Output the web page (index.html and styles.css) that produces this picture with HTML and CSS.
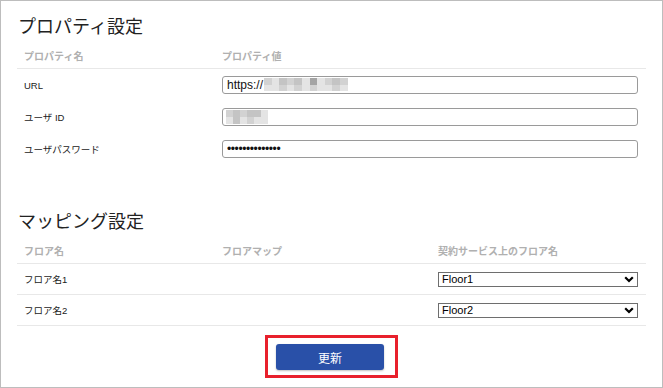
FILE: index.html
```html
<!DOCTYPE html>
<html lang="ja">
<head>
    <meta charset="UTF-8">
    <meta name="viewport" content="width=device-width, initial-scale=1.0">
    <title>設定</title>
    <link rel="stylesheet" href="styles.css">
</head>
<body>
    <div class="page">
        <h2 class="title">プロパティ設定</h2>
        <div class="table props">
            <div class="row head">
                <div class="cell">プロパティ名</div>
                <div class="cell">プロパティ値</div>
            </div>
            <div class="row">
                <div class="cell label">URL</div>
                <div class="cell">
                    <div class="field">
                        <input type="text" value="https://">
                        <span class="mosaic mosaic-url">
                            <i class="m2"></i><i class="m3"></i><i class="m1"></i><i class="m2"></i><i class="m1"></i><i class="m3"></i><i class="m4"></i><i class="m3"></i><i class="m2"></i><i class="m1"></i><i class="m2"></i>
                            <i class="m3"></i><i class="m3"></i><i class="m2"></i><i class="m3"></i><i class="m2"></i><i class="m3"></i><i class="m2"></i><i class="m3"></i><i class="m3"></i><i class="m2"></i><i class="m3"></i>
                        </span>
                    </div>
                </div>
            </div>
            <div class="row">
                <div class="cell label">ユーザ ID</div>
                <div class="cell">
                    <div class="field">
                        <input type="text" value="">
                        <span class="mosaic mosaic-id">
                            <i class="m2"></i><i class="m1"></i><i class="m2"></i><i class="m1"></i><i class="m1"></i><i class="m3"></i>
                            <i class="m3"></i><i class="m1"></i><i class="m3"></i><i class="m2"></i><i class="m3"></i><i class="m3"></i>
                        </span>
                    </div>
                </div>
            </div>
            <div class="row">
                <div class="cell label">ユーザパスワード</div>
                <div class="cell">
                    <div class="field">
                        <input class="secret" type="password" value="abcdefghijklmn">
                    </div>
                </div>
            </div>
        </div>

        <h2 class="title title-second">マッピング設定</h2>
        <div class="table mapping">
            <div class="row head">
                <div class="cell">フロア名</div>
                <div class="cell">フロアマップ</div>
                <div class="cell">契約サービス上のフロア名</div>
            </div>
            <div class="row lined">
                <div class="cell label">フロア名1</div>
                <div class="cell"></div>
                <div class="cell">
                    <div class="select-wrap">
                        <select>
                            <option>Floor1</option>
                            <option>Floor2</option>
                        </select>
                        <svg class="chevron" width="10" height="7" viewBox="0 0 10 7"><path d="M1.2 1.2 L5 5 L8.8 1.2" fill="none" stroke="#000" stroke-width="2.2"/></svg>
                    </div>
                </div>
            </div>
            <div class="row lined">
                <div class="cell label">フロア名2</div>
                <div class="cell"></div>
                <div class="cell">
                    <div class="select-wrap">
                        <select>
                            <option>Floor1</option>
                            <option selected>Floor2</option>
                        </select>
                        <svg class="chevron" width="10" height="7" viewBox="0 0 10 7"><path d="M1.2 1.2 L5 5 L8.8 1.2" fill="none" stroke="#000" stroke-width="2.2"/></svg>
                    </div>
                </div>
            </div>
        </div>

        <div class="actions">
            <div class="highlight">
                <button class="btn">更新</button>
            </div>
        </div>
    </div>
</body>
</html>
```

FILE: styles.css
```css
html, body {
    margin: 0;
    padding: 0;
    background: #fff;
}

body {
    font-family: "Liberation Sans", "Noto Sans CJK JP", sans-serif;
    color: #222;
}

.page {
    box-sizing: border-box;
    width: 663px;
    height: 388px;
    border: 1px solid #bdbdbd;
    padding: 13px 16px 0 16px;
}

.title {
    margin: 0 0 6px 1px;
    font-family: "Noto Sans CJK JP", sans-serif;
    font-size: 18px;
    font-weight: normal;
    line-height: 22px;
    color: #222;
}

.title-second {
    margin-top: 44px;
}

.row {
    display: grid;
    align-items: center;
    height: 32px;
}

.props .row {
    grid-template-columns: 198px 1fr;
}

.mapping .row {
    grid-template-columns: 198px 216px 1fr;
}

.row.head {
    height: 26px;
    border-bottom: 1px solid #e8e8e8;
    font-family: "Noto Sans CJK JP", sans-serif;
    font-size: 10px;
    font-weight: bold;
    color: #b0b0b0;
}

.mapping .row.lined {
    height: 30px;
    border-bottom: 1px solid #e8e8e8;
}

.cell {
    padding: 0 8px 0 7px;
}

.label {
    font-size: 9.5px;
    color: #1a1a1a;
}

.field {
    position: relative;
}

.field input {
    box-sizing: border-box;
    display: block;
    width: 100%;
    height: 18px;
    margin: 0;
    padding: 0 4px;
    border: 1px solid #9a9a9a;
    border-radius: 3px;
    font-family: "Liberation Sans", sans-serif;
    font-size: 12px;
    color: #111;
    background: #fff;
}

.field input.secret {
    letter-spacing: -0.4px;
}

.mosaic {
    position: absolute;
    display: grid;
}

.mosaic i {
    display: block;
}

.mosaic-url {
    left: 42px;
    top: 2px;
    grid-template-columns: repeat(11, 7.6px);
    grid-template-rows: 7px 6px;
}

.mosaic-id {
    left: 4px;
    top: 2px;
    grid-template-columns: repeat(6, 7px);
    grid-template-rows: 7px 7px;
}

.m1 { background: #c4c4c4; }
.m2 { background: #d2d2d2; }
.m3 { background: #e4e4e4; }
.m4 { background: #a4a4a4; }

.select-wrap {
    position: relative;
}

.select-wrap select {
    -webkit-appearance: none;
    appearance: none;
    box-sizing: border-box;
    display: block;
    width: 100%;
    height: 15px;
    margin: 0;
    padding: 0 3px;
    border: 1px solid #6e6e6e;
    border-radius: 0;
    background: #fff;
    font-family: "Liberation Sans", sans-serif;
    font-size: 11px;
    line-height: 13px;
    color: #000;
}

.chevron {
    position: absolute;
    right: 4px;
    top: 4px;
    pointer-events: none;
}

.actions {
    display: flex;
    justify-content: center;
    margin-top: 9px;
}

.highlight {
    border: 3px solid #e8202c;
    padding: 6px 11px 5px 8px;
}

.btn {
    display: block;
    width: 108px;
    height: 26px;
    border: none;
    border-radius: 3px;
    background-color: #2950a8;
    color: #fff;
    font-family: "Noto Sans CJK JP", sans-serif;
    font-size: 12px;
    box-shadow: 0 1px 2px rgba(0,0,0,0.25);
    cursor: pointer;
}
```
